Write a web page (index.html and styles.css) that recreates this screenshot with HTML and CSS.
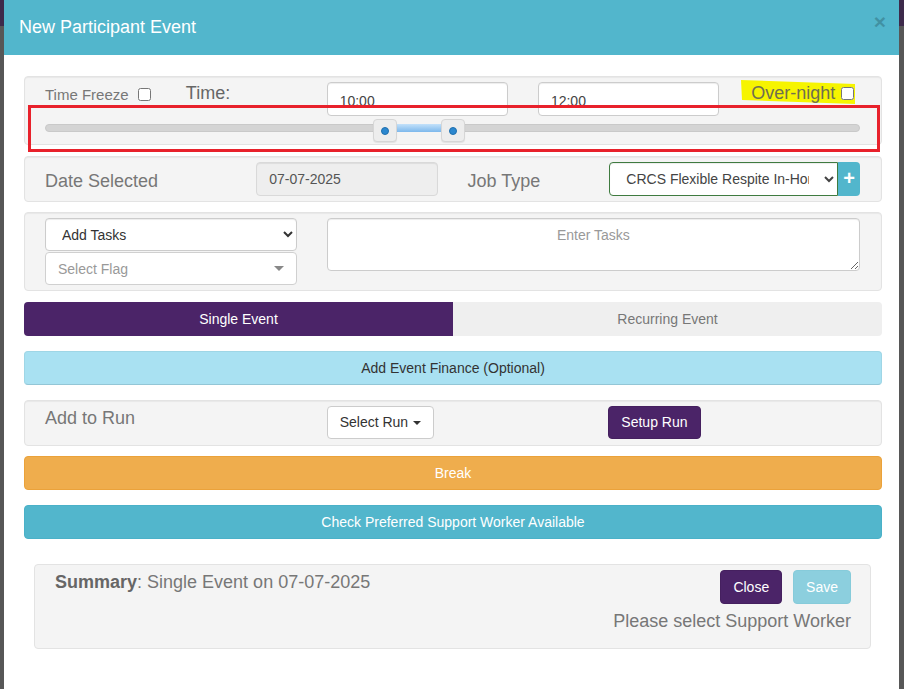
FILE: index.html
```html
<!DOCTYPE html>
<html lang="en">

<head>
    <meta charset="UTF-8">
    <title>New Participant Event</title>
    <link rel="stylesheet" href="styles.css">
</head>

<body>
    <div class="modal">
        <div class="modal-header">
            <h4 class="modal-title">New Participant Event</h4>
            <span class="close">&times;</span>
        </div>
        <div class="modal-body">
            <!-- 时间 -->
            <div class="well well-time">
                <div class="row">
                    <div class="col span-2 label-sm">Time Freeze <input type="checkbox" class="chk"></div>
                    <div class="col span-2 label-lg">Time:</div>
                    <div class="col span-3"><input type="text" class="form-control time-input" value="10:00"></div>
                    <div class="col span-3"><input type="text" class="form-control time-input" value="12:00"></div>
                    <div class="col span-2 label-lg overnight">
                        <svg class="marker" width="116" height="26" viewBox="0 0 116 26">
                            <polygon points="0,1 114,5 114,25 1,21" fill="#f6f400" />
                        </svg>
                        <span>Over-night</span> <input type="checkbox" class="chk chk-over">
                    </div>
                </div>
                <div class="row">
                    <div class="col span-12">
                        <div class="slider">
                            <div class="track"></div>
                            <div class="range"></div>
                            <span class="handle handle-from"><i></i></span>
                            <span class="handle handle-to"><i></i></span>
                        </div>
                    </div>
                </div>
            </div>

            <!-- 日期 -->
            <div class="well">
                <div class="row">
                    <div class="col span-3 label-lg label-mid">Date Selected</div>
                    <div class="col span-3"><input type="text" class="form-control readonly" value="07-07-2025" readonly></div>
                    <div class="col span-2 label-lg label-mid">Job Type</div>
                    <div class="col span-4">
                        <div class="input-group">
                            <select class="form-control job-select">
                                <option>CRCS Flexible Respite In-Home Support</option>
                            </select>
                            <span class="add-btn">+</span>
                        </div>
                    </div>
                </div>
            </div>

            <!-- 任务 -->
            <div class="well well-tasks">
                <div class="row">
                    <div class="col span-4">
                        <select class="form-control task-select">
                            <option>Add Tasks</option>
                        </select>
                        <div class="flag-select">
                            <span>Select Flag</span>
                            <b class="caret-down"></b>
                        </div>
                    </div>
                    <div class="col span-8">
                        <textarea class="form-control tasks" placeholder="Enter Tasks"></textarea>
                    </div>
                </div>
            </div>

            <div class="tabs">
                <div class="tab active">Single Event</div>
                <div class="tab">Recurring Event</div>
            </div>

            <div class="btn-block btn-finance">Add Event Finance (Optional)</div>

            <div class="well well-run">
                <div class="row">
                    <div class="col span-4 label-lg label-top">Add to Run</div>
                    <div class="col span-4"><span class="btn btn-default">Select Run <b class="caret-sm"></b></span></div>
                    <div class="col span-4"><span class="btn btn-purple">Setup Run</span></div>
                </div>
            </div>

            <div class="btn-block btn-break">Break</div>
            <div class="btn-block btn-check">Check Preferred Support Worker Available</div>

            <!-- 汇总 -->
            <div class="summary">
                <div class="summary-top">
                    <div class="summary-text"><b>Summary</b>: Single Event on 07-07-2025</div>
                    <div class="summary-btns">
                        <span class="btn btn-purple">Close</span>
                        <span class="btn btn-save">Save</span>
                    </div>
                </div>
                <div class="summary-msg">Please select Support Worker</div>
            </div>

            <div class="red-box"></div>
        </div>
    </div>
</body>

</html>
```

FILE: styles.css
```css
* {
    margin: 0;
    padding: 0;
    box-sizing: border-box;
}

html,
body {
    height: 100%;
    overflow: hidden;
}

body {
    font-family: "Liberation Sans", Arial, sans-serif;
    font-size: 14px;
    color: #333;
    background: linear-gradient(to bottom, #3d2a4b 0, #3d2a4b 26px, #575757 26px);
}
/* 弹窗 */

.modal {
    margin-left: 4px;
    width: 895px;
    min-height: 689px;
    background-color: #fff;
}

.modal-header {
    display: flex;
    justify-content: space-between;
    align-items: flex-start;
    height: 55px;
    padding: 15px 13px 15px 15px;
    background-color: #52b6cc;
}

.modal-title {
    font-size: 18px;
    line-height: 25px;
    font-weight: normal;
    color: #fff;
}

.close {
    font-size: 21px;
    font-weight: bold;
    line-height: 21px;
    margin-top: -4px;
    color: #000;
    opacity: 0.2;
}

.modal-body {
    position: relative;
    padding: 21px 17px 20px 20px;
}
/* 面板 */

.well {
    background-color: #f4f4f4;
    border: 1px solid #e3e3e3;
    border-radius: 4px;
    box-shadow: inset 0 1px 1px rgba(0, 0, 0, 0.05);
    padding: 5px 6px 5px 5px;
    margin-bottom: 10px;
}

.well-time {
    padding-bottom: 0;
    margin-bottom: 11px;
}

.well-tasks {
    margin-bottom: 11px;
}

.well-run {
    padding-bottom: 6px;
}

.row {
    display: grid;
    grid-template-columns: repeat(12, 1fr);
}

.col {
    padding: 0 15px;
}

.span-2 {
    grid-column: span 2;
}

.span-3 {
    grid-column: span 3;
}

.span-4 {
    grid-column: span 4;
}

.span-8 {
    grid-column: span 8;
}

.span-12 {
    grid-column: span 12;
}

.label-sm {
    font-size: 15px;
    line-height: 20px;
    padding-top: 3px;
    color: #777;
    white-space: nowrap;
}

.label-lg {
    font-size: 18px;
    line-height: 20px;
    padding-top: 1px;
    color: #666;
    white-space: nowrap;
}

.label-mid {
    padding-top: 9px;
    color: #777;
}

.label-top {
    padding-top: 2px;
    color: #777;
}

.chk {
    width: 13px;
    height: 13px;
    margin-left: 5px;
    vertical-align: -1px;
}

.overnight {
    position: relative;
    z-index: 0;
    padding-left: 17px;
    color: #6f6f50;
}

.overnight .marker {
    position: absolute;
    left: 7px;
    top: -3px;
    z-index: -1;
}

.chk-over {
    margin-left: 1px;
}
/* 表单 */

.form-control {
    display: block;
    width: 100%;
    height: 34px;
    padding: 6px 12px;
    font-family: inherit;
    font-size: 14px;
    line-height: 20px;
    color: #444;
    background-color: #fff;
    border: 1px solid #ccc;
    border-radius: 4px;
    box-shadow: inset 0 1px 1px rgba(0, 0, 0, 0.075);
    outline: none;
}

.time-input {
    padding-top: 8px;
    padding-bottom: 4px;
}

.readonly {
    background-color: #eee;
    border-color: #d9d9d9;
    color: #555;
}

.input-group {
    display: flex;
    padding-left: 1px;
}

.job-select {
    width: 229px;
    border-color: #3f7b40;
    border-radius: 4px 0 0 4px;
    color: #444;
    padding-left: 12px;
}

.add-btn {
    width: 23px;
    height: 34px;
    line-height: 32px;
    text-align: center;
    color: #fff;
    font-size: 20px;
    font-weight: bold;
    background-color: #52b6cc;
    border-radius: 0 4px 4px 0;
}

.task-select {
    height: 33px;
    color: #333;
}

.flag-select {
    display: flex;
    justify-content: space-between;
    align-items: center;
    height: 33px;
    margin-top: 1px;
    padding: 0 12px;
    background-color: #fff;
    border: 1px solid #d0d0d0;
    border-radius: 4px;
    color: #999;
}

.caret-down {
    width: 0;
    height: 0;
    border: 5px solid transparent;
    border-top-color: #888;
    border-bottom: 0;
}

.tasks {
    height: 53px;
    resize: vertical;
    text-align: center;
}

.tasks::placeholder {
    color: #999;
}
/* 滑块 */

.slider {
    position: relative;
    height: 28px;
}

.slider .track {
    position: absolute;
    left: 0;
    right: 0;
    top: 8px;
    height: 8px;
    background-color: #d4d4d4;
    border: 1px solid #c9c9c9;
    border-radius: 4px;
}

.slider .range {
    position: absolute;
    left: 352px;
    width: 56px;
    top: 8px;
    height: 8px;
    background: linear-gradient(#c3e1fa, #7db8ec);
}

.slider .handle {
    position: absolute;
    top: 3px;
    width: 24px;
    height: 23px;
    background-color: #ededed;
    border: 1px solid #d6d6d6;
    border-radius: 4px;
    box-shadow: 0 1px 1px rgba(0, 0, 0, 0.08);
}

.slider .handle i {
    position: absolute;
    left: 7px;
    top: 7px;
    width: 8px;
    height: 8px;
    border-radius: 50%;
    background-color: #2b87cf;
    border: 1px solid #1f6fae;
}

.handle-from {
    left: 328px;
}

.handle-to {
    left: 396px;
}
/* 按钮 */

.tabs {
    display: flex;
    margin-bottom: 15px;
}

.tab {
    flex: 1;
    height: 34px;
    line-height: 34px;
    text-align: center;
    color: #777;
    background-color: #efefef;
    border-radius: 0 4px 4px 0;
}

.tab.active {
    color: #fff;
    background-color: #4b2468;
    border-radius: 4px 0 0 4px;
}

.btn-block {
    height: 34px;
    line-height: 32px;
    text-align: center;
    border: 1px solid transparent;
    border-radius: 4px;
}

.btn-finance {
    color: #333;
    background-color: #a9e1f2;
    border-color: #9fd6e6 #9fd6e6 #93c6d6;
    margin-bottom: 15px;
}

.btn-break {
    color: #fff;
    background-color: #efad4d;
    border-color: #eba23a;
    margin-bottom: 15px;
}

.btn-check {
    color: #fff;
    background-color: #52b6cc;
    border-color: #4ab1c8;
}

.btn {
    display: inline-block;
    height: 33px;
    line-height: 31px;
    padding: 0 12px;
    border: 1px solid transparent;
    border-radius: 4px;
    white-space: nowrap;
    vertical-align: top;
}

.btn-default {
    color: #333;
    background-color: #fff;
    border-color: #ccc;
}

.caret-sm {
    display: inline-block;
    width: 0;
    height: 0;
    margin-left: 1px;
    vertical-align: 2px;
    border: 4px solid transparent;
    border-top-color: #333;
    border-bottom: 0;
}

.btn-purple {
    color: #fff;
    background-color: #4b2468;
    border-color: #45205f;
}

.btn-save {
    color: #fff;
    background-color: #8ccfde;
    border-color: #86cbda;
}
/* 汇总 */

.summary {
    margin: 25px 11px 0 10px;
    padding: 5px 19px 17px 20px;
    background-color: #f4f4f4;
    border: 1px solid #e3e3e3;
    border-radius: 4px;
}

.summary-top {
    display: flex;
    justify-content: space-between;
    align-items: flex-start;
}

.summary-text {
    font-size: 18px;
    line-height: 20px;
    padding-top: 2px;
    color: #777;
}

.summary-text b {
    color: #666;
}

.summary-btns .btn {
    height: 34px;
    line-height: 32px;
}

.summary-btns .btn-save {
    margin-left: 7px;
}

.summary-msg {
    margin-top: 7px;
    font-size: 18px;
    line-height: 20px;
    text-align: right;
    color: #777;
}
/* 标注框 */

.red-box {
    position: absolute;
    left: 24px;
    top: 50px;
    width: 852px;
    height: 47px;
    border: 3px solid #e8212b;
}
```
